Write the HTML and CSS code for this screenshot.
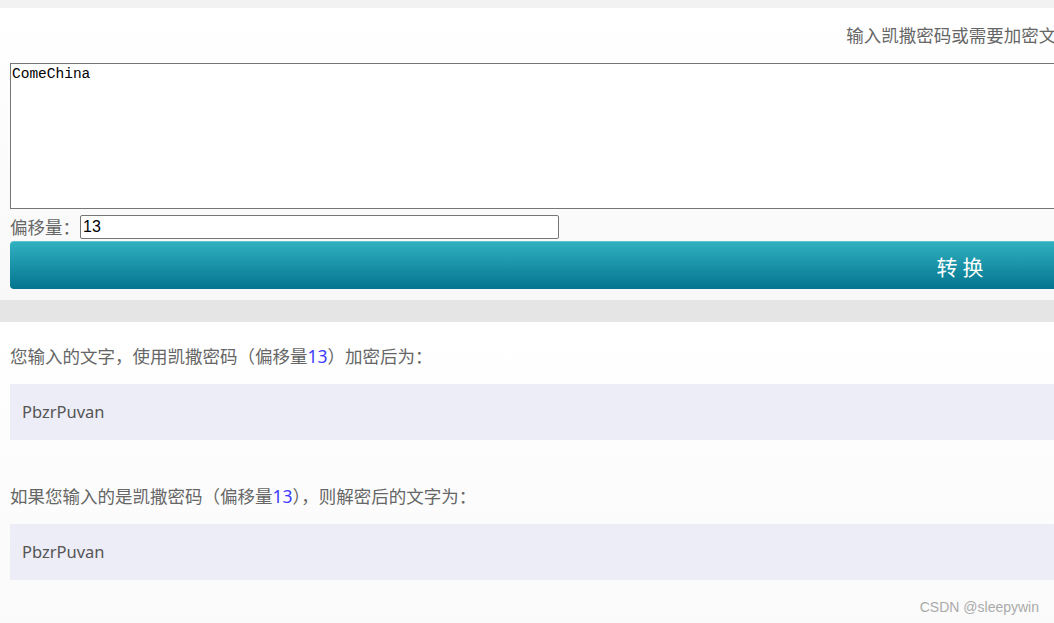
FILE: index.html
```html
<!DOCTYPE html>
<html lang="zh-CN">
<head>
    <meta charset="UTF-8">
    <title>凯撒密码加密解密</title>
    <link rel="stylesheet" href="styles.css">
</head>
<body>
<div class="screen">
    <div class="page">
        <div class="top-band"></div>

        <div class="panel form-panel">
            <p class="form-title">输入凯撒密码或需要加密文字</p>
            <textarea class="source" spellcheck="false">ComeChina</textarea>
            <div class="shift-row">
                <label class="shift-label" for="shift">偏移量：</label>
                <input class="shift-input" id="shift" type="text" value="13">
            </div>
            <button class="convert-btn">转换</button>
        </div>

        <div class="gap-band"></div>

        <div class="panel result-panel">
            <p class="result-title">您输入的文字，使用凯撒密码（偏移量<span class="num">13</span>）加密后为：</p>
            <div class="result-box">PbzrPuvan</div>

            <p class="result-title second">如果您输入的是凯撒密码（偏移量<span class="num">13</span>），则解密后的文字为：</p>
            <div class="result-box">PbzrPuvan</div>
        </div>
    </div>

    <div class="watermark">CSDN @sleepywin</div>
</div>
</body>
</html>
```

FILE: styles.css
```css
html, body {
    margin: 0;
    padding: 0;
    overflow: hidden;
    background-color: #f8f8f8;
}
body {
    font-family: "Noto Sans", "Noto Sans CJK SC", sans-serif;
    color: #666;
}
.screen {
    position: relative;
    width: 1054px;
    height: 623px;
    overflow: hidden;
}
.page {
    width: 1920px;
}
.top-band {
    height: 8px;
    background-color: #f2f2f2;
}
.gap-band {
    height: 22px;
    background-color: #e5e5e5;
}
.panel {
    background: linear-gradient(to bottom, #ffffff, #f8f8f8);
    padding: 0 10px;
}
.form-panel {
    padding-top: 13px;
    padding-bottom: 11px;
}
.form-title {
    margin: 0;
    text-align: center;
    font-family: "Noto Sans CJK SC", sans-serif;
    font-size: 17.5px;
    line-height: 28px;
    color: #666;
}
.source {
    display: block;
    box-sizing: border-box;
    width: 1900px;
    height: 146px;
    margin: 14px 0 0;
    padding: 1px 1px;
    border: 1px solid #767676;
    background: #fff;
    font-family: "Liberation Mono", monospace;
    font-size: 14.5px;
    line-height: 18px;
    color: #000;
    resize: none;
    outline: none;
}
.shift-row {
    display: flex;
    align-items: center;
    margin-top: 6px;
    height: 24px;
}
.shift-label {
    width: 70px;
    font-family: "Noto Sans CJK SC", sans-serif;
    font-size: 17.5px;
    line-height: 24px;
    color: #666;
}
.shift-input {
    box-sizing: border-box;
    width: 479px;
    height: 24px;
    margin: 0;
    padding: 0 2px;
    border: 1px solid #767676;
    border-radius: 2px;
    font-family: "Liberation Sans", Arial, sans-serif;
    font-size: 16px;
    color: #000;
    outline: none;
}
.convert-btn {
    display: block;
    width: 1900px;
    height: 48px;
    margin-top: 2px;
    padding: 0;
    border: none;
    border-top: 1px solid #5fc3cf;
    border-radius: 4px;
    background: linear-gradient(to bottom, #30b0bf, #04748f);
    color: #fff;
    font-family: "Noto Sans CJK SC", sans-serif;
    font-size: 21px;
    letter-spacing: 5px;
    text-indent: 5px;
    cursor: pointer;
}
.result-panel {
    padding-top: 20px;
    height: 400px;
}
.result-title {
    margin: 0;
    font-family: "Noto Sans CJK SC", sans-serif;
    font-size: 17.5px;
    line-height: 28px;
    color: #666;
}
.result-title.second {
    margin-top: 42px;
}
.num {
    font-family: "Noto Sans", sans-serif;
    color: #3d3dff;
}
.result-box {
    height: 56px;
    margin-top: 14px;
    padding: 0 12px;
    background-color: #ededf7;
    font-family: "Noto Sans", sans-serif;
    font-size: 16.5px;
    line-height: 56px;
    color: #555;
}
.watermark {
    position: absolute;
    right: 15px;
    bottom: 8px;
    font-family: "Liberation Sans", Arial, sans-serif;
    font-size: 14px;
    color: #aaa;
}
```
